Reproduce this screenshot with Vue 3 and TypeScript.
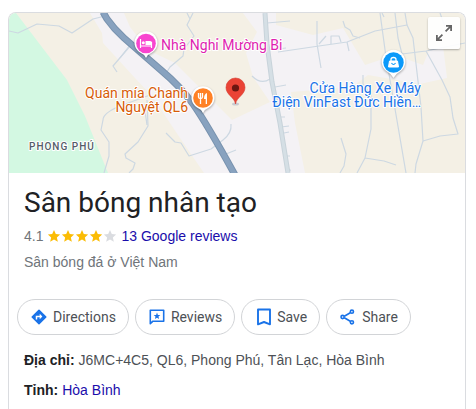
<script setup lang="ts">
interface Action {
  id: string
  label: string
}

interface Fact {
  label: string
  value: string
  href?: string
}

const rating = 4.1
const reviewCount = 13
const stars = [1, 2, 3, 4, 5]

const actions: Action[] = [
  { id: 'directions', label: 'Directions' },
  { id: 'reviews', label: 'Reviews' },
  { id: 'save', label: 'Save' },
  { id: 'share', label: 'Share' },
]

const facts: Fact[] = [
  { label: 'Địa chỉ:', value: 'J6MC+4C5, QL6, Phong Phú, Tân Lạc, Hòa Bình' },
  { label: 'Tỉnh:', value: 'Hòa Bình', href: '#hoa-binh' },
]
</script>

<template>
  <main class="card">
    <div class="map">
      <svg class="map-canvas" viewBox="9 13 456 160" preserveAspectRatio="xMidYMid slice" role="img">
        <rect x="9" y="13" width="456" height="160" fill="#f4f2f5" />
        <g fill="#f4f0e5">
          <path d="M9 13H90L102 33L103 43L135 78L152 96L180 138L204 173H9Z" />
          <path d="M124 13H243L257 32L246 53L253 77L270 102L232 120L207 95L175 63L148 50L130 27Z" />
          <path d="M276 13H465V173H305L295 123L291 92L352 87L368 75L420 84L447 78L443 46H431L423 65L395 55L365 65L352 43L343 28L313 35L276 25Z" />
        </g>
        <path d="M9 13H16L67 80L85 116L108 173H9Z" fill="#d3f8e2" />
        <g fill="none" stroke="#cdd8e2" stroke-width="1.2" stroke-linejoin="round">
          <path d="M9 31L18 33L37 24L59 26L72 33L93 19L105 16" />
          <path d="M131 45L113 66L117 72" />
          <path d="M150 95L120 106Q103 113 103 120L101 130L109 142L109 156L104 173" />
          <path d="M147 100L148 126L138 142L125 154L126 158L135 163L133 169L129 173" />
          <path d="M187 13L190 19L193 13M190 19L187 25L194 36L184 49L183 56L170 67L165 75" />
          <path d="M130 45L120 58M144 104L147 125M166 133L175 142L181 143L189 156L211 149L223 140Q232 133 231 124M226 154L236 150" />
          <path d="M252 76Q261 85 270 79M267 23L290 21M269 50L286 48M275 87L286 85M280 117L285 117M281 127L289 126M284 133L289 132M286 156L290 156M286 171L291 170" />
          <path d="M278 52L319 46L347 42L375 31L407 25L413 38L421 107L423 141L416 164L415 173" />
          <path d="M317 21V44L321 68M319 44L326 36M331 44V36H339L341 42M347 42L349 51" />
          <path d="M343 21L345 27L350 30L353 36L360 38M380 13L386 57L394 103L406 173M382 13L384 17" />
          <path d="M395 13L398 38L402 54M405 13L407 25M402 54L426 51L465 43M426 51L442 80L450 97L453 118L458 134L440 136L423 141" />
          <path d="M363 75L363 84L371 95V129L365 158L357 173M365 158L384 161L396 165M341 138L346 154L344 166L340 173M440 13L445 27" />
        </g>
        <path d="M265 13L267 44L272 82L280 123L288 173" fill="none" stroke="#c8d3da" stroke-width="5" />
        <path d="M265 13L267 44L272 82L280 123L288 173" fill="none" stroke="#d5dfe5" stroke-width="3" />
        <path d="M103 12L107 19Q114 29 124 38L162 71Q180 86 193 104Q207 124 235 175" fill="none" stroke="#7892ae" stroke-width="7" />
        <path d="M103 12L107 19Q114 29 124 38L162 71Q180 86 193 104Q207 124 235 175" fill="none" stroke="#88a2bf" stroke-width="5" />

        <g class="poi">
          <path d="M146 58Q144 54 140 52.500A11.500 11.500 0 1 1 152 52.500Q148 54 146 58Z" fill="#fff" />
          <circle cx="146" cy="43.500" r="9.800" fill="#f845cf" />
          <path d="M140.500 39V48M151.500 42V48M140.500 46H151.500" stroke="#fff" stroke-width="1.200" />
          <path d="M145.500 41H150Q152 41 152 43V45H145.500Z" fill="#fff" />
          <circle cx="143.300" cy="42.800" r="1.500" fill="#fff" />
        </g>
        <g class="poi">
          <path d="M203 113Q201 109 197 107.500A11.500 11.500 0 1 1 209 107.500Q205 109 203 113Z" fill="#fff" />
          <circle cx="203" cy="98" r="9.800" fill="#ff8126" />
          <path d="M198.500 93V97Q198.500 98.500 200.500 98.500T202.500 97V93M200.500 93V104" fill="none" stroke="#fff" stroke-width="1.300" />
          <path d="M207 93Q204 94 204 99H205.700V104H207Z" fill="#fff" />
        </g>
        <g class="poi">
          <path d="M393.500 78Q391 73.500 387 71.500A11.800 11.800 0 1 1 400 71.500Q396 73.500 393.500 78Z" fill="#fff" />
          <circle cx="393.500" cy="62.500" r="10.200" fill="#0b99fa" />
          <path d="M389.500 61H397.500L398.500 67H388.500Z" fill="#fff" stroke="#fff" stroke-linejoin="round" />
          <path d="M391 61V59.500Q391 57.500 393.500 57.500T396 59.500V61" fill="none" stroke="#fff" stroke-width="1.300" />
          <path d="M391.500 63Q393.500 66 395.500 63" fill="none" stroke="#0b99fa" stroke-width="1.200" />
        </g>
        <ellipse cx="235.500" cy="104" rx="3.500" ry="1.500" fill="#c9cbd0" />
        <path d="M235.500 104C234.500 97 226 95 226 87.500A9.500 9.500 0 0 1 245 87.500C245 95 236.500 97 235.500 104Z" fill="#ea4335" stroke="#d33b2f" stroke-width=".6" />
        <circle cx="235.500" cy="88" r="3.600" fill="#6b1711" />

        <g class="map-label">
          <text x="161" y="50" fill="#e01fb0">Nhà Nghỉ Mường Bi</text>
          <g fill="#d75c08" text-anchor="end">
            <text x="188" y="98">Quán mía Chanh</text>
            <text x="188" y="112">Nguyệt QL6</text>
          </g>
          <g fill="#1a73e8" text-anchor="end">
            <text x="421" y="93">Cửa Hàng Xe Máy</text>
            <text x="421" y="107">Điện VinFast Đức Hiền…</text>
          </g>
          <text class="district" x="29" y="150" fill="#545d68">PHONG PHÚ</text>
        </g>
      </svg>
      <button class="expand" type="button" aria-label="Expand map">
        <svg width="18" height="18" viewBox="0 0 18 18" fill="none" stroke="#666" stroke-width="1.800">
          <path d="M11 1.900H16.100V7M15.800 2.200L10.600 7.400M7 16.100H1.900V11M2.200 15.800L7.400 10.600" />
        </svg>
      </button>
    </div>

    <header class="heading">
      <h1>Sân bóng nhân tạo</h1>
      <div class="rating">
        <span>{{ rating }}</span>
        <span class="stars">
          <svg v-for="star in stars" :key="star" width="14" height="14" viewBox="0 0 24 24" :class="{ filled: star <= Math.floor(rating) }">
            <path d="M12 1.500L15.100 8.700L22.500 9.400L16.900 14.500L18.600 22L12 18L5.400 22L7.100 14.500L1.500 9.400L8.900 8.700Z" />
          </svg>
        </span>
        <a href="#reviews">{{ reviewCount }} Google reviews</a>
      </div>
      <p class="category">Sân bóng đá ở Việt Nam</p>
    </header>

    <nav class="actions">
      <button v-for="action in actions" :key="action.id" type="button" :class="action.id">
        <svg v-if="action.id === 'directions'" width="18" height="18" viewBox="0 0 18 18">
          <path d="M9 2.200L15.800 9L9 15.800L2.200 9Z" fill="#1a73e8" stroke="#1a73e8" stroke-width="1.500" stroke-linejoin="round" />
          <path d="M6.500 11.600V8.500H10.500" fill="none" stroke="#fff" stroke-width="1.500" />
          <path d="M9.700 5.800L12.400 8.500L9.700 11.200Z" fill="#fff" />
        </svg>
        <svg v-else-if="action.id === 'reviews'" width="18" height="18" viewBox="0 0 18 18">
          <path d="M2.300 2.300H15.700V13.200H5L2.300 15.700Z" fill="none" stroke="#1a73e8" stroke-width="1.600" stroke-linejoin="round" />
          <path d="M9 4.500L9.900 6.900L12.400 7L10.500 8.600L11.100 11L9 9.700L6.900 11L7.500 8.600L5.600 7L8.100 6.900Z" fill="#1a73e8" />
        </svg>
        <svg v-else-if="action.id === 'save'" width="18" height="18" viewBox="0 0 18 18">
          <path d="M4 1.500H16V16.300L10 14L4 16.300Z" fill="none" stroke="#1a73e8" stroke-width="1.900" stroke-linejoin="round" />
        </svg>
        <svg v-else width="18" height="18" viewBox="0 0 18 18" fill="none" stroke="#1a73e8" stroke-width="1.600">
          <path d="M5.300 8.200L11.300 4.700M5.300 9.800L11.300 13.300" />
          <circle cx="3.600" cy="9" r="1.600" />
          <circle cx="12.900" cy="3.700" r="1.600" />
          <circle cx="12.900" cy="14.300" r="1.600" />
        </svg>
        <span>{{ action.label }}</span>
      </button>
    </nav>

    <dl class="facts">
      <div v-for="fact in facts" :key="fact.label">
        <dt>{{ fact.label }}</dt>
        <dd>
          <a v-if="fact.href" :href="fact.href">{{ fact.value }}</a>
          <template v-else>{{ fact.value }}</template>
        </dd>
      </div>
    </dl>
  </main>
</template>

<style>
body {
  background: #fff;
}
</style>

<style scoped>
.card {
  box-sizing: border-box;
  min-height: calc(100vh - 12px);
  margin: 12px 10px 0 8px;
  border: 1px solid #dadce0;
  border-bottom: 0;
  border-radius: 8px 8px 0 0;
  overflow: hidden;
  color: #4d5156;
  font: 14px/20px "Liberation Sans", Arial, sans-serif;
}

a {
  color: #1a0dab;
  text-decoration: none;
}

.map {
  position: relative;
  height: 160px;
}

.map-canvas {
  display: block;
  width: 100%;
  height: 100%;
}

.map-label {
  font: 14px Roboto, sans-serif;
  paint-order: stroke;
  stroke: #fff;
  stroke-width: 2px;
  stroke-linejoin: round;
}

.district {
  font-size: 10px;
  font-weight: 500;
  letter-spacing: 1px;
}

.poi {
  filter: drop-shadow(0 1px 1px rgba(0, 0, 0, 0.35));
}

.expand {
  position: absolute;
  top: 4px;
  right: 5px;
  display: grid;
  place-items: center;
  width: 32px;
  height: 32px;
  padding: 0;
  border: 0;
  border-radius: 2px;
  background: rgba(255, 255, 255, 0.9);
  box-shadow: 0 1px 2px rgba(0, 0, 0, 0.3);
}

.heading {
  padding: 12px 15px 0;
}

h1 {
  margin: 0;
  color: #202124;
  font: 400 28px/36px Roboto, sans-serif;
}

.rating {
  display: flex;
  align-items: center;
  gap: 4px;
  margin-top: 5px;
  color: #70757a;
}

.stars {
  display: flex;
}

.stars svg {
  display: block;
  fill: #dadce0;
}

.stars .filled {
  fill: #fbbc04;
}

.category {
  margin: 6px 0 0;
  color: #70757a;
}

.actions {
  display: flex;
  flex-wrap: wrap;
  gap: 6px;
  padding: 27px 8px 0;
}

.actions button {
  display: flex;
  align-items: center;
  gap: 5px;
  height: 36px;
  padding: 0 12px;
  border: 1px solid #d2d4d7;
  border-radius: 18px;
  background: #fff;
  color: #4d5156;
  font: 14px/20px Roboto, sans-serif;
}

.facts {
  display: grid;
  gap: 10px;
  margin: 0;
  padding: 15px 15px 0;
}

.facts div {
  display: flex;
  gap: 4px;
}

dt {
  flex: none;
  color: #202124;
  font-weight: 700;
}

dd {
  margin: 0;
}
</style>
